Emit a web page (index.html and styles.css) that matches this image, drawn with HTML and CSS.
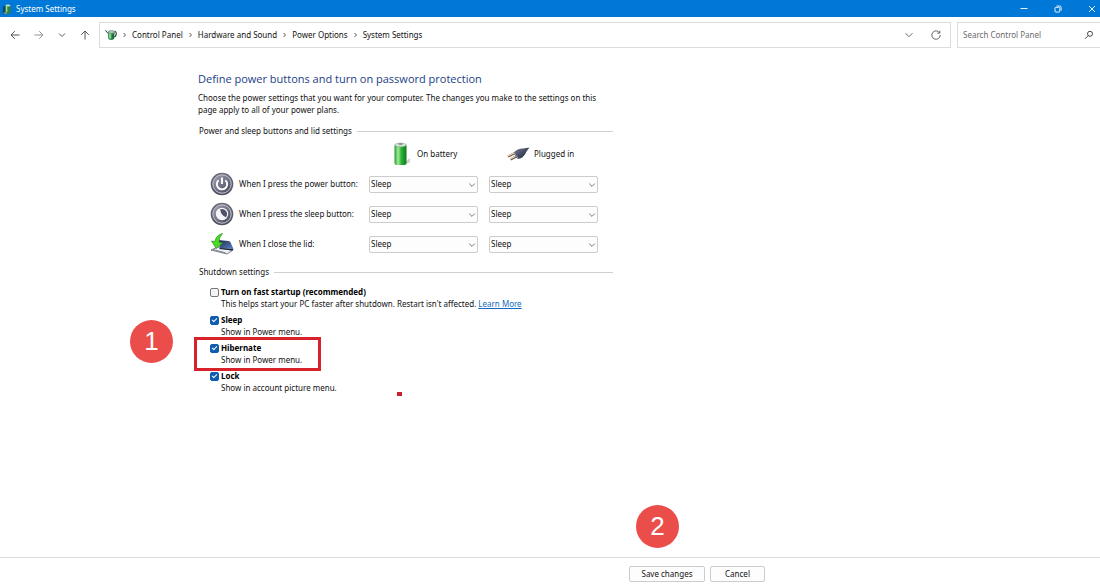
FILE: index.html
```
<!DOCTYPE html>
<html lang="en">
<head>
    <meta charset="UTF-8">
    <meta name="viewport" content="width=device-width, initial-scale=1.0">
    <title>System Settings</title>
    <link rel="stylesheet" href="styles.css">
</head>
<body>
    <!-- shared icons -->
    <svg class="defs" width="0" height="0">
        <defs>
            <linearGradient id="green" x1="0" x2="1" y1="0" y2="0">
                <stop offset="0" stop-color="#1f9a2c"/>
                <stop offset="0.3" stop-color="#a5ee9c"/>
                <stop offset="0.55" stop-color="#2fb53a"/>
                <stop offset="1" stop-color="#0c7a1c"/>
            </linearGradient>
            <linearGradient id="ring" x1="0" x2="0" y1="0" y2="1">
                <stop offset="0" stop-color="#6d6d7d"/>
                <stop offset="1" stop-color="#4d4d61"/>
            </linearGradient>
            <linearGradient id="face" x1="0" x2="1" y1="0" y2="1">
                <stop offset="0" stop-color="#a3a3b5"/>
                <stop offset="0.5" stop-color="#747489"/>
                <stop offset="1" stop-color="#3f3f58"/>
            </linearGradient>
            <linearGradient id="lid" x1="0" x2="1" y1="0" y2="1">
                <stop offset="0" stop-color="#1d2946"/>
                <stop offset="1" stop-color="#5b82c4"/>
            </linearGradient>
            <linearGradient id="plug" x1="0" x2="1" y1="0" y2="1">
                <stop offset="0" stop-color="#77809a"/>
                <stop offset="1" stop-color="#14182b"/>
            </linearGradient>
            <symbol id="chevron" viewBox="0 0 8 8">
                <path d="M1.2 2.6 L4 5.4 L6.8 2.6" fill="none" stroke="currentColor" stroke-width="0.8"/>
            </symbol>
            <symbol id="sep" viewBox="0 0 7 6">
                <path d="M2.5 1 L4.5 3 L2.5 5" fill="none" stroke="#444" stroke-width="0.9"/>
            </symbol>
            <symbol id="power" viewBox="0 0 12 12">
                <path d="M0.5 1.2 Q1.5 4 4.5 4.5" fill="none" stroke="#333f3a" stroke-width="1"/>
                <path d="M9.5 2 Q12 3 11 6 Q10.5 8 9 8" fill="none" stroke="#333f3a" stroke-width="1.2"/>
                <path d="M2.6 3 L3.4 10 Q6 12.2 9 10 L9.8 3 Z" fill="#2d8a4c"/>
                <path d="M3.6 4 L4.2 9.4 L6.2 9.8 L6.2 4 Z" fill="#7fd08c"/>
                <path d="M7.5 5 L9 5 L8.6 9.8 L7.5 10.4 Z" fill="#1b5e37"/>
                <ellipse cx="6.3" cy="3" rx="3.4" ry="1.4" fill="#a9cbb5" stroke="#4d6f5c" stroke-width="0.5"/>
            </symbol>
        </defs>
    </svg>

    <header class="titlebar">
        <svg class="app-icon" viewBox="0 0 12 12">
            <rect x="1" y="3" width="4" height="8" rx="1" fill="#15415c"/>
            <rect x="3.5" y="1.5" width="6" height="9.5" rx="1.8" fill="#2d8050"/>
            <path d="M5 3 L5 9.5" stroke="#96dda0" stroke-width="1.6"/>
            <ellipse cx="6.5" cy="2.2" rx="2.7" ry="1.2" fill="#c3dccb"/>
            <path d="M2 10 L5 11" stroke="#d9c95c" stroke-width="1"/>
        </svg>
        <span class="titlebar-text">System Settings</span>
        <div class="window-controls">
            <button type="button" aria-label="Minimize">
                <svg viewBox="0 0 8 8"><path d="M0.5 3.5 H7.5"/></svg>
            </button>
            <button type="button" aria-label="Restore">
                <svg viewBox="0 0 8 8"><rect x="1" y="2.3" width="4.8" height="4.8" rx="1"/><path d="M2.5 1 H5.8 Q7.1 1 7.1 2.3 V5.6"/></svg>
            </button>
            <button type="button" aria-label="Close">
                <svg viewBox="0 0 8 8"><path d="M1 1 L7 7 M7 1 L1 7"/></svg>
            </button>
        </div>
    </header>

    <nav class="toolbar">
        <div class="nav-buttons">
            <button type="button" aria-label="Back">
                <svg viewBox="0 0 10 10"><path d="M9.5 5 H1 M4.8 1.2 L1 5 L4.8 8.8"/></svg>
            </button>
            <button type="button" class="disabled" aria-label="Forward">
                <svg viewBox="0 0 10 10"><path d="M0.5 5 H9 M5.2 1.2 L9 5 L5.2 8.8"/></svg>
            </button>
            <button type="button" class="recent" aria-label="Recent locations">
                <svg viewBox="0 0 8 10"><path d="M1 3.5 L4 6.5 L7 3.5"/></svg>
            </button>
            <button type="button" aria-label="Up">
                <svg viewBox="0 0 10 10"><path d="M5 9.5 V1 M1.2 4.8 L5 1 L8.8 4.8"/></svg>
            </button>
        </div>
        <div class="address">
            <svg class="address-icon"><use href="#power"/></svg>
            <svg class="sep"><use href="#sep"/></svg>
            <a href="#">Control Panel</a>
            <svg class="sep"><use href="#sep"/></svg>
            <a href="#">Hardware and Sound</a>
            <svg class="sep"><use href="#sep"/></svg>
            <a href="#">Power Options</a>
            <svg class="sep"><use href="#sep"/></svg>
            <a href="#">System Settings</a>
            <div class="address-buttons">
                <button type="button" aria-label="Previous locations">
                    <svg viewBox="0 0 10 10"><path d="M1.5 3.2 L5 6.7 L8.5 3.2"/></svg>
                </button>
                <button type="button" aria-label="Refresh">
                    <svg viewBox="0 0 10 10"><path d="M8.6 2.9 A4.2 4.2 0 1 0 9.2 5 M8.8 0.6 V3.1 H6.3"/></svg>
                </button>
            </div>
        </div>
        <div class="search">
            <input type="text" placeholder="Search Control Panel" aria-label="Search Control Panel">
            <svg viewBox="0 0 10 10"><circle cx="6" cy="3.8" r="2.5"/><path d="M4.2 5.6 L1 8.8"/></svg>
        </div>
    </nav>

    <main class="content">
        <h1>Define power buttons and turn on password protection</h1>
        <p class="intro">Choose the power settings that you want for your computer. The changes you make to the settings on this page apply to all of your power plans.</p>

        <h2 class="legend">Power and sleep buttons and lid settings</h2>
        <div class="power-grid">
            <div class="column-head column-battery">
                <svg viewBox="0 0 18 24">
                    <path d="M12 20 L17 16 L17 20 L13 22.5 Z" fill="#d4d0cf"/>
                    <rect x="1.5" y="2" width="12" height="21" rx="2.2" fill="url(#green)"/>
                    <ellipse cx="7.5" cy="3" rx="5.8" ry="1.9" fill="#d5e6d4" stroke="#6c9a70" stroke-width="0.5"/>
                    <ellipse cx="7.5" cy="2" rx="2.2" ry="1" fill="#86908a"/>
                </svg>
                <span>On battery</span>
            </div>
            <div class="column-head column-plugged">
                <svg viewBox="0 0 24 16">
                    <path d="M2 10.5 L10 6.5 M4.5 13.5 L12 9.5" stroke="#6f5a49" stroke-width="2.4"/>
                    <path d="M1.5 10 L10 6 M4 13 L12 9" stroke="#f0d6b5" stroke-width="1.2"/>
                    <path d="M8 6.5 Q11 2.5 17 2.5 L23.5 1.5 L20.5 5.5 Q18 12 12 13 Q8.5 10.5 8 6.5 Z" fill="url(#plug)"/>
                    <path d="M8 6.5 Q10 10 12.5 12.5" fill="none" stroke="#a4a9b8" stroke-width="1"/>
                </svg>
                <span>Plugged in</span>
            </div>

            <div class="row-label">
                <svg viewBox="0 0 24 24">
                    <circle cx="12" cy="12" r="11.3" fill="url(#ring)"/>
                    <circle cx="12" cy="12" r="9.2" fill="url(#face)" stroke="#c8c8d3" stroke-width="1"/>
                    <path d="M8.6 8.2 A5.2 5.2 0 1 0 15.4 8.2" fill="none" stroke="#fff" stroke-width="1.9"/>
                    <path d="M12 5.4 V12" stroke="#fff" stroke-width="1.9"/>
                </svg>
                <span>When I press the power button:</span>
            </div>
            <div class="select"><select aria-label="Power button, on battery"><option>Sleep</option><option>Hibernate</option></select><svg><use href="#chevron"/></svg></div>
            <div class="select"><select aria-label="Power button, plugged in"><option>Sleep</option><option>Hibernate</option></select><svg><use href="#chevron"/></svg></div>

            <div class="row-label">
                <svg viewBox="0 0 24 24">
                    <circle cx="12" cy="12" r="11.3" fill="url(#ring)"/>
                    <circle cx="12" cy="12" r="9.2" fill="url(#face)" stroke="#c8c8d3" stroke-width="1"/>
                    <circle cx="12" cy="12" r="6.2" fill="#f4f4f8"/>
                    <path d="M10.2 7.2 A5.2 5.2 0 0 1 16 15.2 Q10.6 13.4 10.2 7.2 Z" fill="#505068"/>
                </svg>
                <span>When I press the sleep button:</span>
            </div>
            <div class="select"><select aria-label="Sleep button, on battery"><option>Sleep</option><option>Hibernate</option></select><svg><use href="#chevron"/></svg></div>
            <div class="select"><select aria-label="Sleep button, plugged in"><option>Sleep</option><option>Hibernate</option></select><svg><use href="#chevron"/></svg></div>

            <div class="row-label">
                <svg viewBox="0 0 24 24">
                    <path d="M1 18 L8 15 L22.5 18.5 L17 22 Z" fill="#eef1f4" stroke="#59616e" stroke-width="0.8"/>
                    <path d="M3 17.5 L15.5 20.8" stroke="#59616e" stroke-width="0.7"/>
                    <path d="M8 8 L18.5 9 Q20 9.2 20.6 10.5 L23.5 17 L10 16 Z" fill="url(#lid)"/>
                    <path d="M10 16 L23.5 17 L22.5 18.5 L9 17 Z" fill="#1b2338"/>
                    <path d="M12.5 1.5 Q6 3 5 9.5 L1.5 9 L6.2 16.5 L12.5 11 L9 10.3 Q9 5 12.5 1.5 Z" fill="#4ed92a" stroke="#239614" stroke-width="0.7"/>
                </svg>
                <span>When I close the lid:</span>
            </div>
            <div class="select"><select aria-label="Lid, on battery"><option>Sleep</option><option>Hibernate</option></select><svg><use href="#chevron"/></svg></div>
            <div class="select"><select aria-label="Lid, plugged in"><option>Sleep</option><option>Hibernate</option></select><svg><use href="#chevron"/></svg></div>
        </div>

        <h2 class="legend">Shutdown settings</h2>
        <div class="options">
            <div class="option">
                <input type="checkbox" id="fast">
                <label for="fast">Turn on fast startup (recommended)</label>
                <p>This helps start your PC faster after shutdown. Restart isn't affected. <a href="#">Learn More</a></p>
            </div>
            <div class="option">
                <input type="checkbox" id="sleep" checked>
                <label for="sleep">Sleep</label>
                <p>Show in Power menu.</p>
            </div>
            <div class="option highlight">
                <input type="checkbox" id="hibernate" checked>
                <label for="hibernate">Hibernate</label>
                <p>Show in Power menu.</p>
                <span class="step step-one">1</span>
            </div>
            <div class="option">
                <input type="checkbox" id="lock" checked>
                <label for="lock">Lock</label>
                <p>Show in account picture menu.</p>
                <span class="mark"></span>
            </div>
        </div>
    </main>

    <footer class="actions">
        <span class="step step-two">2</span>
        <button type="button" class="save">Save changes</button>
        <button type="button" class="cancel">Cancel</button>
    </footer>
</body>
</html>
```
FILE: styles.css
```
*, *::before, *::after{
    box-sizing: border-box;
}
body{
    display: flex;
    flex-direction: column;
    min-height: 100vh;
    margin: 0;
    background: #fff;
    color: #111;
    font-family: "Noto Sans", "Open Sans", sans-serif;
    font-size: 8px;
    line-height: 12px;
}
h1, h2, p{
    margin: 0;
    font-weight: normal;
}
button, input, select{
    font: inherit;
    color: inherit;
}
button{
    padding: 0;
    border: none;
    background: none;
}
svg{
    display: block;
    flex: none;
}
.defs{
    position: absolute;
}

/* title bar */
.titlebar{
    display: flex;
    align-items: center;
    height: 17px;
    padding-left: 2px;
    background: #0078d7;
    color: #fff;
}
.app-icon{
    width: 11px;
    height: 12px;
    margin-right: 3px;
}
.window-controls{
    display: flex;
    gap: 26px;
    margin-left: auto;
    padding-right: 4px;
}
.window-controls svg{
    width: 8px;
    height: 8px;
    fill: none;
    stroke: #fff;
    stroke-width: 0.9;
}

/* navigation */
.toolbar{
    display: flex;
    gap: 6px;
    padding-top: 5px;
}
.toolbar svg{
    fill: none;
    stroke-width: 0.9;
}
.nav-buttons{
    display: flex;
    align-items: center;
    gap: 14px;
    width: 93px;
    padding-left: 10px;
}
.nav-buttons svg{
    width: 10px;
    height: 10px;
    stroke: #444;
}
.nav-buttons .recent svg{
    width: 8px;
}
.nav-buttons .disabled svg{
    stroke: #888;
}
.address{
    display: flex;
    flex: 1;
    align-items: center;
    gap: 4px;
    height: 26px;
    padding: 0 9px 0 5px;
    border: 1px solid #dcdcdc;
}
.address a{
    color: inherit;
    text-decoration: none;
}
.address-icon{
    width: 12px;
    height: 12px;
}
.sep{
    width: 7px;
    height: 6px;
}
.address-buttons{
    display: flex;
    gap: 17px;
    margin-left: auto;
}
.address-buttons svg{
    width: 10px;
    height: 10px;
    stroke: #555;
}
.search{
    display: flex;
    align-items: center;
    width: 143px;
    padding: 0 6px 0 5px;
    border: 1px solid #dcdcdc;
    border-right: none;
}
.search input{
    flex: 1;
    min-width: 0;
    padding: 0;
    border: none;
    outline: none;
}
.search input::placeholder{
    color: #6b6b6b;
}
.search svg{
    width: 10px;
    height: 10px;
    stroke: #333;
}

/* page */
.content{
    flex: 1;
    width: 415px;
    margin-left: 198px;
    padding-top: 23px;
}
h1{
    color: #1a3e85;
    font-family: "Open Sans", sans-serif;
    font-size: 11px;
    line-height: 16px;
}
.intro{
    margin-top: 5px;
}
.legend{
    display: flex;
    align-items: center;
    gap: 5px;
    margin-top: 9px;
    padding-left: 1px;
    font-size: 8px;
}
.legend::after{
    content: "";
    flex: 1;
    height: 1px;
    background: #d0d0d0;
}
.power-grid{
    display: grid;
    grid-template-columns: 148px 109px 109px;
    grid-auto-rows: 24px;
    align-items: center;
    gap: 6px 11px;
    padding: 5px 0 1px 12px;
}
.column-head{
    display: flex;
    align-items: center;
    gap: 6px;
}
.column-battery{
    grid-column: 2;
    padding-left: 24px;
}
.column-battery svg{
    width: 18px;
    height: 24px;
}
.column-plugged{
    padding-left: 17px;
    gap: 4px;
}
.column-plugged svg{
    width: 24px;
    height: 16px;
}
.row-label{
    display: flex;
    align-items: center;
    gap: 5px;
    white-space: nowrap;
}
.row-label svg{
    width: 24px;
    height: 24px;
}
.select{
    position: relative;
}
.select select{
    display: block;
    appearance: none;
    width: 100%;
    height: 17px;
    padding: 0 14px 0 1px;
    border: 1px solid #ccc;
    border-radius: 2px;
    background: #fdfdfd;
}
.select svg{
    position: absolute;
    top: 5px;
    right: 2px;
    width: 8px;
    height: 8px;
    color: #555;
    pointer-events: none;
}

/* shutdown options */
.options{
    display: grid;
    gap: 4px;
    padding: 8px 0 0 12px;
}
.option{
    position: relative;
    display: grid;
    grid-template-columns: 9px 1fr;
    align-items: center;
    column-gap: 2px;
}
.option input{
    appearance: none;
    display: grid;
    place-items: center;
    width: 9px;
    height: 9px;
    margin: 0;
    border: 1px solid #777;
    border-radius: 2px;
    background: #f5f5f5;
}
.option input:checked{
    border-color: #0f5cb0;
    background: #0f5cb0;
}
.option input:checked::before{
    content: "";
    width: 5px;
    height: 3px;
    border: solid #fff;
    border-width: 0 0 1px 1px;
    transform: translateY(-1px) rotate(-45deg);
}
.option label{
    font-weight: bold;
    color: #000;
}
.option p{
    grid-column: 2;
}
.option a{
    color: #1568c0;
}

/* step annotations */
.highlight::after{
    content: "";
    position: absolute;
    top: -5px;
    left: -16px;
    width: 127px;
    height: 34px;
    border: 3px solid #d8222b;
}
.step{
    position: absolute;
    width: 43px;
    height: 43px;
    border-radius: 50%;
    background: #eb4d4b;
    color: #fff;
    font-family: "Liberation Sans", Arial, sans-serif;
    font-size: 26px;
    line-height: 42px;
    text-align: center;
}
.step-one{
    top: -22px;
    left: -80px;
}
.step-two{
    top: -53px;
    left: 636px;
}
.mark{
    position: absolute;
    top: 22px;
    left: 187px;
    width: 5px;
    height: 4px;
    background: #c8202f;
}

/* bottom bar */
.actions{
    position: relative;
    display: flex;
    gap: 5px;
    padding: 8px 0 5px 629px;
    border-top: 1px solid #dcdcdc;
}
.actions button{
    height: 16px;
    border: 1px solid #ccc;
    border-radius: 2px;
    background: #fdfdfd;
}
.actions .save{
    width: 76px;
}
.actions .cancel{
    width: 55px;
}
```
